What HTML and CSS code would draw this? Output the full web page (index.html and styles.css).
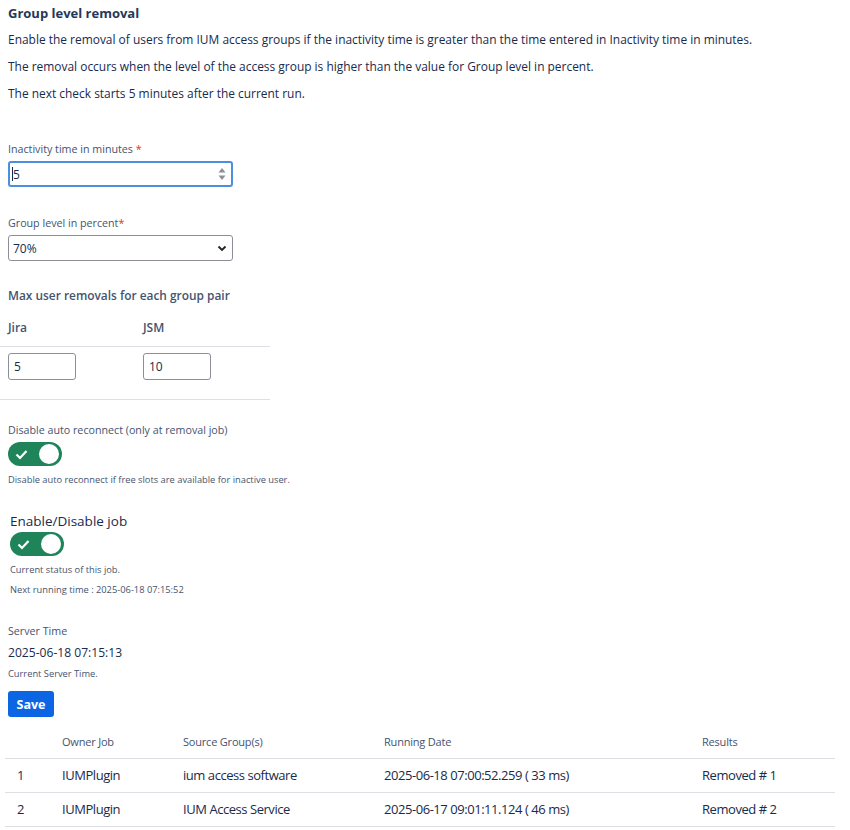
FILE: index.html
```html
<!DOCTYPE html>
<html lang="en">
<head>
    <meta charset="UTF-8">
    <meta name="viewport" content="width=device-width, initial-scale=1.0">
    <title>Group level removal</title>
    <link rel="stylesheet" href="styles.css">
</head>
<body>
    <div class="page">
        <h2 class="title">Group level removal</h2>
        <p class="intro">Enable the removal of users from IUM access groups if the inactivity time is greater than the time entered in Inactivity time in minutes.</p>
        <p class="intro">The removal occurs when the level of the access group is higher than the value for Group level in percent.</p>
        <p class="intro">The next check starts 5 minutes after the current run.</p>

        <div class="field first">
            <label class="label">Inactivity time in minutes <span class="req">*</span></label>
            <div class="control">
                <input type="text" class="text-input focused" value="5">
                <span class="caret"></span>
                <svg class="spinner" width="8" height="14" viewBox="0 0 8 14">
                    <path d="M4 1 L7.5 5.5 H0.5 Z" fill="#8a8f98"/>
                    <path d="M4 13 L7.5 8.5 H0.5 Z" fill="#8a8f98"/>
                </svg>
            </div>
        </div>

        <div class="field">
            <label class="label">Group level in percent<span class="req">*</span></label>
            <div class="control">
                <select class="text-input select">
                    <option>70%</option>
                </select>
                <svg class="chevron" width="10" height="8" viewBox="0 0 10 8">
                    <path d="M1.5 2.5 L5 6 L8.5 2.5" fill="none" stroke="#222" stroke-width="1.8"/>
                </svg>
            </div>
        </div>

        <h3 class="subhead">Max user removals for each group pair</h3>
        <table class="pairs">
            <thead>
                <tr><th>Jira</th><th>JSM</th></tr>
            </thead>
            <tbody>
                <tr>
                    <td><input type="text" class="text-input small" value="5"></td>
                    <td><input type="text" class="text-input small" value="10"></td>
                </tr>
            </tbody>
        </table>

        <div class="toggle-block">
            <div class="label">Disable auto reconnect (only at removal job)</div>
            <div class="toggle">
                <svg class="tick" width="13" height="11" viewBox="0 0 13 11">
                    <path d="M1.5 5.5 L5 9 L11.5 2" fill="none" stroke="#fff" stroke-width="2.2"/>
                </svg>
                <span class="knob"></span>
            </div>
            <div class="help">Disable auto reconnect if free slots are available for inactive user.</div>
        </div>

        <div class="toggle-block job">
            <div class="job-label">Enable/Disable job</div>
            <div class="toggle">
                <svg class="tick" width="13" height="11" viewBox="0 0 13 11">
                    <path d="M1.5 5.5 L5 9 L11.5 2" fill="none" stroke="#fff" stroke-width="2.2"/>
                </svg>
                <span class="knob"></span>
            </div>
            <div class="help">Current status of this job.</div>
            <div class="help next">Next running time : 2025-06-18 07:15:52</div>
        </div>

        <div class="server">
            <div class="label">Server Time</div>
            <div class="server-time">2025-06-18 07:15:13</div>
            <div class="help">Current Server Time.</div>
        </div>

        <button type="button" class="save">Save</button>

        <table class="history">
            <thead>
                <tr>
                    <th class="c-num"></th>
                    <th class="c-owner">Owner Job</th>
                    <th class="c-source">Source Group(s)</th>
                    <th class="c-date">Running Date</th>
                    <th class="c-result">Results</th>
                </tr>
            </thead>
            <tbody>
                <tr>
                    <td>1</td>
                    <td>IUMPlugin</td>
                    <td>ium access software</td>
                    <td>2025-06-18 07:00:52.259 ( 33 ms)</td>
                    <td>Removed # 1</td>
                </tr>
                <tr>
                    <td>2</td>
                    <td>IUMPlugin</td>
                    <td>IUM Access Service</td>
                    <td>2025-06-17 09:01:11.124 ( 46 ms)</td>
                    <td>Removed # 2</td>
                </tr>
            </tbody>
        </table>
    </div>
</body>
</html>
```

FILE: styles.css
```css
*{
    margin: 0;
    padding: 0;
    box-sizing: border-box;
}
body{
    font-family: "Open Sans", "Noto Sans", sans-serif;
    color: #172b4d;
    background: #fff;
}
.page{
    padding: 4px 8px 0 8px;
}
.title{
    font-size: 13px;
    font-weight: 700;
    line-height: 18px;
    color: #253858;
}
.intro{
    font-size: 11.95px;
    line-height: 27px;
    margin-top: 0;
}
.title + .intro{
    margin-top: 4px;
}
.label{
    font-size: 10.7px;
    color: #44546f;
    line-height: 16px;
}
.req{
    color: #de350b;
}
.field{
    margin-top: 28px;
}
.field.first{
    margin-top: 34px;
}
.field .label{
    display: block;
    margin-bottom: 4px;
}
.control{
    position: relative;
    width: 225px;
}
.text-input{
    font-family: inherit;
    font-size: 12px;
    color: #172b4d;
    width: 100%;
    height: 26px;
    border: 1px solid #8c8f97;
    border-radius: 3px;
    padding: 0 4px;
    background: #fff;
    outline: none;
}
.text-input.focused{
    border: 2px solid #4c8ee0;
    padding: 0 3px;
}
.caret{
    position: absolute;
    left: 4px;
    top: 6px;
    width: 1px;
    height: 14px;
    background: #172b4d;
}
.spinner{
    position: absolute;
    right: 7px;
    top: 6px;
}
.select{
    appearance: none;
    -webkit-appearance: none;
}
.chevron{
    position: absolute;
    right: 6px;
    top: 9px;
}
.subhead{
    font-size: 11.9px;
    font-weight: 600;
    color: #44546f;
    margin-top: 25px;
    line-height: 18px;
}
.pairs{
    border-collapse: collapse;
    width: 270px;
    margin-left: -8px;
    margin-top: 15px;
}
.pairs th{
    text-align: left;
    font-size: 12px;
    font-weight: 600;
    color: #44546f;
    padding: 0 0 10px 8px;
    border-bottom: 1px solid #dcdfe4;
}
.pairs th:first-child{
    width: 135px;
}
.pairs td{
    padding: 6px 0 19px 8px;
    border-bottom: 1px solid #dcdfe4;
}
.text-input.small{
    width: 68px;
    height: 27px;
    padding: 0 5px;
}
.toggle-block{
    margin-top: 22px;
}
.toggle{
    position: relative;
    width: 54px;
    height: 24px;
    border-radius: 12px;
    background: #1f845a;
    margin-top: 4px;
}
.tick{
    position: absolute;
    left: 7px;
    top: 7px;
}
.knob{
    position: absolute;
    right: 3px;
    top: 2px;
    width: 20px;
    height: 20px;
    border-radius: 50%;
    background: #fff;
}
.help{
    font-size: 9.3px;
    color: #44546f;
    margin-top: 7px;
    line-height: 14px;
}
.job{
    margin-top: 25px;
    padding-left: 2px;
}
.job-label{
    font-size: 13.5px;
    color: #172b4d;
    line-height: 18px;
}
.job .toggle{
    margin-top: 2px;
}
.help.next{
    margin-top: 6px;
}
.server{
    margin-top: 26px;
}
.server-time{
    font-size: 12.1px;
    margin-top: 5px;
    line-height: 18px;
}
.server .help{
    margin-top: 5px;
}
.save{
    margin-top: 10px;
    font-family: inherit;
    font-size: 12.5px;
    font-weight: 700;
    color: #fff;
    background: #0c66e4;
    border: none;
    border-radius: 3px;
    height: 26px;
    width: 46px;
}
.history{
    border-collapse: collapse;
    width: 830px;
    margin-left: -3px;
    margin-top: 17px;
}
.history th{
    text-align: left;
    font-size: 11px;
    font-weight: 400;
    letter-spacing: -0.2px;
    color: #44546f;
    padding: 0 0 9px 12px;
    border-bottom: 1px solid #dcdfe4;
}
.history td{
    font-size: 13px;
    letter-spacing: -0.45px;
    line-height: 17px;
    color: #172b4d;
    padding: 8px 0 8px 12px;
    height: 34px;
    border-bottom: 1px solid #dcdfe4;
}
.c-num{ width: 45px; }
.c-owner{ width: 121px; }
.c-source{ width: 201px; }
.c-date{ width: 318px; }
```
